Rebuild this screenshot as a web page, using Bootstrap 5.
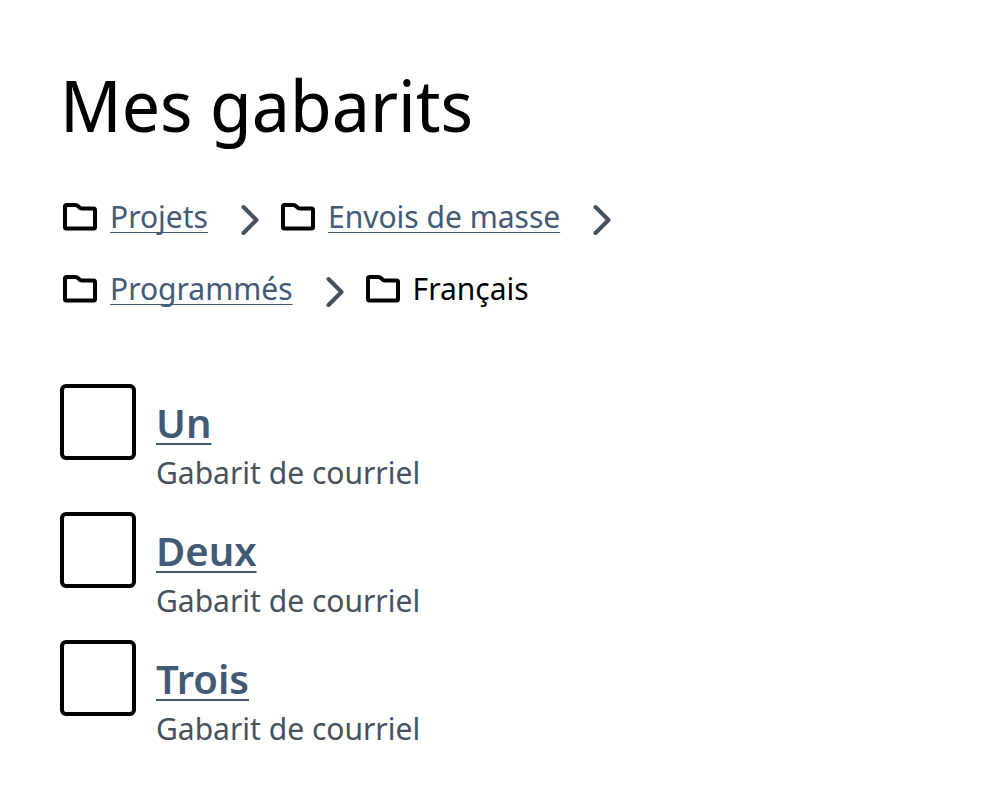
<!DOCTYPE html>
<html lang="fr">
<head>
<meta charset="utf-8">
<meta name="viewport" content="width=device-width, initial-scale=1">
<title>Mes gabarits</title>
<link href="https://cdn.jsdelivr.net/npm/bootstrap@5.3.0/dist/css/bootstrap.min.css" rel="stylesheet">
<style>
  body { font-family: "Noto Sans", sans-serif; font-size: 30px; line-height: 40px; color: #000; background: #fff; }
  main { padding: 60px; }
  h1.page-title { font-family: "Noto Sans Display", "Noto Sans", sans-serif; font-size: 72px; line-height: 88px; font-weight: 400; margin: 0 0 36px; }
  a { color: #425a76; text-decoration-thickness: 2px; text-underline-offset: 5px; text-decoration-skip-ink: none; }
  .trail { max-width: 640px; row-gap: 4px; margin-bottom: 60px; }
  .trail a { text-decoration-thickness: 1px; text-underline-offset: 4px; }
  .crumb { height: 68px; padding-bottom: 2px; }
  .folder { width: 40px; height: 40px; margin-right: 10px; }
  .chevron { width: 20px; height: 32px; margin: 5px 17px 0 33px; }
  .template-list { row-gap: 20px; }
  .template-row { column-gap: 20px; }
  .form-check-input.pick { width: 76px; height: 76px; margin: 0; border: 4px solid #000; border-radius: 6px; }
  .template-name { font-size: 40px; line-height: 54px; font-weight: 600; padding-top: 12px; }
  .template-kind { color: #46515e; line-height: 46px; margin-bottom: -4px; }
</style>
</head>
<body>
<svg class="d-none" aria-hidden="true">
  <symbol id="i-folder" viewBox="0 0 40 40"><path d="M5 9.5Q5 8 6.500 8H15Q17 8 18.500 9.500Q20 11.500 22 11.500H33.500Q35 11.500 35 13V30Q35 31.500 33.500 31.500H6.500Q5 31.500 5 30Z" fill="none" stroke="#000" stroke-width="4" stroke-linejoin="round"/></symbol>
  <symbol id="i-chevron" viewBox="0 0 20 32"><path d="M2.500 3L15.500 16L2.500 29" fill="none" stroke="#46515e" stroke-width="4" stroke-linecap="round" stroke-linejoin="round"/></symbol>
</svg>
<main>
  <h1 class="page-title">Mes gabarits</h1>
  <nav aria-label="Fil d’Ariane">
    <ol class="trail list-unstyled d-flex flex-wrap">
      <li class="crumb d-flex align-items-center"><svg class="folder" aria-hidden="true"><use href="#i-folder"/></svg><a href="#">Projets</a><svg class="chevron" aria-hidden="true"><use href="#i-chevron"/></svg></li>
      <li class="crumb d-flex align-items-center"><svg class="folder" aria-hidden="true"><use href="#i-folder"/></svg><a href="#">Envois de masse</a><svg class="chevron" aria-hidden="true"><use href="#i-chevron"/></svg></li>
      <li class="crumb d-flex align-items-center"><svg class="folder" aria-hidden="true"><use href="#i-folder"/></svg><a href="#">Programmés</a><svg class="chevron" aria-hidden="true"><use href="#i-chevron"/></svg></li>
      <li class="crumb d-flex align-items-center" aria-current="page"><svg class="folder" aria-hidden="true"><use href="#i-folder"/></svg><span>Français</span></li>
    </ol>
  </nav>
  <ul class="template-list list-unstyled d-flex flex-column mb-0">
    <li class="template-row d-flex"><input class="form-check-input pick flex-shrink-0" type="checkbox" id="t1" aria-labelledby="n1"><div><div class="template-name"><a href="#" id="n1">Un</a></div><div class="template-kind">Gabarit de courriel</div></div></li>
    <li class="template-row d-flex"><input class="form-check-input pick flex-shrink-0" type="checkbox" id="t2" aria-labelledby="n2"><div><div class="template-name"><a href="#" id="n2">Deux</a></div><div class="template-kind">Gabarit de courriel</div></div></li>
    <li class="template-row d-flex"><input class="form-check-input pick flex-shrink-0" type="checkbox" id="t3" aria-labelledby="n3"><div><div class="template-name"><a href="#" id="n3">Trois</a></div><div class="template-kind">Gabarit de courriel</div></div></li>
  </ul>
</main>
<script src="https://cdn.jsdelivr.net/npm/bootstrap@5.3.0/dist/js/bootstrap.bundle.min.js"></script>
</body>
</html>
